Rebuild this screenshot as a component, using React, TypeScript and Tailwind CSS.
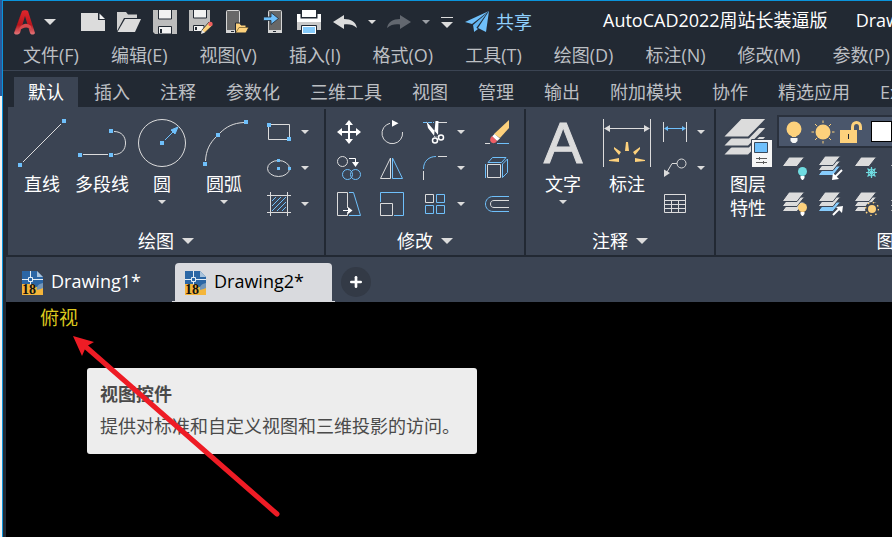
import { Plus } from 'lucide-react';
import type { ReactNode } from 'react';

type IconProps = { children: ReactNode; size?: number };

type Tool = {
  label: string;
  icon: ReactNode;
  split?: boolean;
};

const LIGHT = '#dcdcdc';
const BLUE = '#6fc0fb';
const YELLOW = '#fdd17c';
const TEAL = '#6fdbe0';
const DARK = '#222933';
const PANEL = '#3b4453';

const menus = [
  '文件(F)',
  '编辑(E)',
  '视图(V)',
  '插入(I)',
  '格式(O)',
  '工具(T)',
  '绘图(D)',
  '标注(N)',
  '修改(M)',
  '参数(P)',
];

const ribbonTabs = [
  '默认',
  '插入',
  '注释',
  '参数化',
  '三维工具',
  '视图',
  '管理',
  '输出',
  '附加模块',
  '协作',
  '精选应用',
  'Express Tools',
];

function Icon({ children, size = 24 }: IconProps) {
  return (
    <svg
      width={size}
      height={size}
      viewBox={`0 0 ${size} ${size}`}
      fill="none"
      stroke={LIGHT}
      className="block shrink-0"
      aria-hidden="true"
    >
      {children}
    </svg>
  );
}

function Grip({ x, y }: { x: number; y: number }) {
  return <rect x={x - 2} y={y - 2} width="4" height="4" fill={BLUE} stroke="none" />;
}

function Caret({ large = false, dim = false }: { large?: boolean; dim?: boolean }) {
  return (
    <svg
      width={large ? 12 : 8}
      height={large ? 6 : 4}
      viewBox="0 0 8 4"
      className="block shrink-0"
      aria-hidden="true"
    >
      <path d="M0 0H8L4 4z" fill={dim ? '#9b9fa5' : LIGHT} />
    </svg>
  );
}

/* Quick access icons */

function AppLogo() {
  return (
    <svg width="22" height="25" viewBox="0 0 22 25" fill="none" aria-hidden="true">
      <defs>
        <linearGradient id="logo-red" x1="0" y1="0" x2="0" y2="1">
          <stop offset="0" stopColor="#e0262c" />
          <stop offset="0.6" stopColor="#b8161d" />
          <stop offset="1" stopColor="#e3777b" />
        </linearGradient>
      </defs>
      <path
        d="M8 1C9 0 13 0 14 1L21 23C20 25 17 25 16 23L11 6L6 23C4 25 1 25 0 23z"
        fill="url(#logo-red)"
      />
      <path d="M6 17C10 13 13 13 17 16L18 20C13 16 10 17 4 21z" fill="#d8494d" />
      <path d="M8 1L2 19L0 23L6 6z" fill="#8f1017" opacity="0.5" />
    </svg>
  );
}

function NewIcon() {
  return (
    <Icon>
      <path d="M0 3H17V10H24V21H0z" fill={LIGHT} stroke="none" />
      <path d="M18.500 3.500L24 9H18.500z" fill="#f4f4f4" stroke="none" />
    </Icon>
  );
}

function OpenIcon() {
  return (
    <Icon>
      <path d="M0 2H9L11 4.500H20V8H7L0 21z" fill="#d0d0d0" stroke="none" />
      <path d="M8 9H24L18 22H0.500z" fill={LIGHT} stroke="none" />
    </Icon>
  );
}

function SaveIcon() {
  return (
    <Icon>
      <path d="M0 0H24V24H2L0 22z" fill="#bdbdbd" stroke="none" />
      <path d="M5.500 -1H18.500V9H5.500z" fill="#f2f2f2" stroke={DARK} />
      <path d="M5.500 16.500H18.500V24H5.500z" fill="#f2f2f2" stroke={DARK} />
      <path d="M7 19H9V23H7z" fill={DARK} stroke="none" />
    </Icon>
  );
}

function SaveAsIcon() {
  return (
    <Icon>
      <path d="M0 0H21V12L12 21H0z" fill="#bdbdbd" stroke="none" />
      <path d="M4.500 -1H17.500V8H4.500z" fill="#f2f2f2" stroke={DARK} />
      <path d="M4.500 15.500H15V21.500H4.500z" fill="#f2f2f2" stroke={DARK} />
      <path d="M6 17H8V20H6z" fill={DARK} stroke="none" />
      <path d="M12 24L13 20L20 12L24 15L16 22.500z" fill={YELLOW} stroke={DARK} strokeWidth="0.800" />
      <path d="M12 24L13 20L16 22.500z" fill="#e8e8e8" stroke="none" />
      <circle cx="21.500" cy="14" r="2.200" fill="#ee5f5f" stroke="none" />
    </Icon>
  );
}

function PhoneOpenIcon() {
  return (
    <Icon>
      <rect x="1.500" y="0.500" width="13" height="22" rx="1" fill="#686868" stroke="#d6d6d6" />
      <path d="M1 20H15V23H1z" fill="#d6d6d6" stroke="none" />
      <path d="M6 21H9V22H6z" fill={DARK} stroke="none" />
      <path d="M10.500 13H15L16 15H21V17H24L21 23H10.500z" fill={YELLOW} stroke={DARK} />
      <path d="M11 22.500L14 17.500H23" stroke="#7a6334" strokeWidth="0.800" />
    </Icon>
  );
}

function PhoneSaveIcon() {
  return (
    <Icon>
      <rect x="7.500" y="0.500" width="13" height="22" rx="1" fill="#686868" stroke="#d6d6d6" />
      <path d="M7 20H21V23H7z" fill="#d6d6d6" stroke="none" />
      <path d="M12 21H15V22H12z" fill={DARK} stroke="none" />
      <path d="M2.500 7H10V2.500L17.500 8.500L10 14.500V10.500H2.500z" fill={BLUE} stroke={DARK} strokeWidth="0.800" />
    </Icon>
  );
}

function PrintIcon() {
  return (
    <Icon>
      <path d="M5 0H19V7H5z" fill="#ffffff" stroke="none" />
      <path d="M0 4H3.500V8.500H20.500V4H24V12H0z" fill="#ffffff" stroke="none" />
      <path d="M0 12H24V20H0z" fill="#c9c9c9" stroke="none" />
      <path d="M4.500 15.500H19.500V24.500H4.500z" fill={BLUE} stroke={DARK} />
      <path d="M5.500 16.500H18.500V23.500H5.500z" fill="#86cbfb" stroke="#ffffff" />
    </Icon>
  );
}

function UndoIcon() {
  return (
    <Icon>
      <path
        d="M0 12L11 5V9C18 9 23 12 24 18C20 14.500 16 14 11 14.500V19z"
        fill={LIGHT}
        stroke="none"
      />
    </Icon>
  );
}

function RedoIcon() {
  return (
    <Icon>
      <path
        d="M24 12L13 5V9C6 9 1 12 0 18C4 14.500 8 14 13 14.500V19z"
        fill="#62676f"
        stroke="none"
      />
    </Icon>
  );
}

function ShareIcon() {
  return (
    <Icon>
      <path d="M0 12L24 1L7 14z" fill={BLUE} stroke="none" />
      <path d="M24 1L21 22L13 18z" fill={BLUE} stroke="none" />
      <path d="M8 15L22 3L12 17L9 21z" fill="#62b4f0" stroke="none" />
      <path d="M9 16V22L13 19" fill={BLUE} stroke="none" />
    </Icon>
  );
}

/* Draw panel */

const lineIcon = (
  <Icon size={48}>
    <path d="M5 43L43 5" />
    <Grip x={2} y={46} />
    <Grip x={46} y={2} />
  </Icon>
);

const polylineIcon = (
  <Icon size={48}>
    <path d="M5 35.500H30M36 12.500C44 12.500 47.500 18 47.500 24S44 35.500 36 35.500" />
    <Grip x={2} y={36} />
    <Grip x={33} y={36} />
    <Grip x={33} y={12} />
  </Icon>
);

const circleIcon = (
  <Icon size={48}>
    <circle cx="24" cy="24" r="23.500" />
    <path d="M27 21L36 12" stroke={BLUE} />
    <path d="M40 8L33 11L35 13L37 15z" fill={BLUE} stroke={BLUE} />
    <Grip x={24} y={24} />
  </Icon>
);

const arcIcon = (
  <Icon size={48}>
    <path d="M5.500 42C6 31 10 24 16 18M20 14C26 8 33 4 44 3.500" />
    <Grip x={5} y={45} />
    <Grip x={18} y={16} />
    <Grip x={46} y={3} />
  </Icon>
);

const drawTools: Tool[] = [
  {
    label: '矩形',
    split: true,
    icon: (
      <Icon>
        <path d="M1.500 4.500H22.500V19.500H1.500z" />
        <Grip x={2} y={5} />
        <Grip x={22} y={19} />
      </Icon>
    ),
  },
  {
    label: '椭圆',
    split: true,
    icon: (
      <Icon>
        <ellipse cx="11.500" cy="12.500" rx="11" ry="8" />
        <rect x="10" y="3" width="3" height="3" fill={BLUE} stroke="none" />
        <rect x="10" y="11" width="3" height="3" fill={BLUE} stroke="none" />
        <rect x="21" y="11" width="3" height="3" fill={BLUE} stroke="none" />
      </Icon>
    ),
  },
  {
    label: '图案填充',
    split: true,
    icon: (
      <Icon>
        <path d="M3.500 0V24M20.500 0V24M0 3.500H24M0 20.500H24" />
        <path
          d="M5 9L9 5M5 14L14 5M5 19L19 5M10 19L19 10M15 19L19 15"
          stroke={BLUE}
        />
      </Icon>
    ),
  },
];

/* Modify panel */

const modifyTools: Tool[] = [
  {
    label: '移动',
    icon: (
      <Icon>
        <path d="M12 3V21M3 12H21" stroke="#ffffff" strokeWidth="2" />
        <path
          d="M12 0L16 5H8zM12 24L8 19H16zM0 12L5 8V16zM24 12L19 16V8z"
          fill="#ffffff"
          stroke="none"
        />
      </Icon>
    ),
  },
  {
    label: '旋转',
    icon: (
      <Icon>
        <path d="M22.500 12A10.300 10.300 0 1 1 10 3.300" />
        <path d="M12 0L18.500 3.300L12 6.700z" fill="#ffffff" stroke="none" />
      </Icon>
    ),
  },
  {
    label: '修剪',
    split: true,
    icon: (
      <Icon>
        <path d="M0 2.500H11" stroke={BLUE} strokeDasharray="4 1" />
        <path d="M15 2.500H24" />
        <path d="M3.500 1.500L5 8L12 17L16 16zM12.500 1H15.500L15 16L11 17z" fill="#ffffff" stroke="none" />
        <circle cx="12" cy="20.500" r="2.500" stroke="#ffffff" strokeWidth="1.500" />
        <circle cx="18" cy="17.500" r="2.500" stroke="#ffffff" strokeWidth="1.500" />
      </Icon>
    ),
  },
  {
    label: '删除',
    icon: (
      <Icon>
        <path d="M0 23.500H5" />
        <path d="M12 23.500H24" stroke={BLUE} />
        <path d="M24 0V8L15 18L9 14z" fill={YELLOW} stroke="none" />
        <path d="M9.500 14L15 18.500L12 21L7 16.500z" fill="#ffffff" stroke="none" />
        <path d="M7 16L12 21C10 24 7 23.500 6 22C4.500 20.500 5 18 7 16z" fill="#ee5f66" stroke="none" />
      </Icon>
    ),
  },
  {
    label: '复制',
    icon: (
      <Icon>
        <circle cx="5.500" cy="5.500" r="5" />
        <circle cx="10.500" cy="18.500" r="5" stroke={BLUE} />
        <circle cx="18.500" cy="18.500" r="5" stroke={BLUE} />
        <path d="M12 2.500H18.500V7" stroke="#ffffff" />
        <path d="M15 6H22L18.500 11z" fill="#ffffff" stroke="none" />
      </Icon>
    ),
  },
  {
    label: '镜像',
    icon: (
      <Icon>
        <path d="M10.500 2V22.500H0.500z" />
        <path d="M12.500 2V22.500H22.500z" stroke={BLUE} />
      </Icon>
    ),
  },
  {
    label: '圆角',
    split: true,
    icon: (
      <Icon>
        <path d="M0.500 15V24M15 0.500H24" />
        <path d="M0.500 13C0.500 5 6 0.500 13 0.500" stroke={BLUE} />
      </Icon>
    ),
  },
  {
    label: '分解',
    icon: (
      <Icon>
        <path d="M2.500 8.500H15.500V21.500H2.500z" />
        <path
          d="M0.500 8V22M3 6.500L7.500 1.500H21L16.500 6.500zM17.500 8L22.500 3V16.500L17.500 21.500z"
          stroke={BLUE}
        />
      </Icon>
    ),
  },
  {
    label: '拉伸',
    icon: (
      <Icon>
        <path d="M10.500 16V0.500H0.500V23.500H10.500V20" />
        <path d="M12 0.500H16.500L23.500 23.500H12" stroke={BLUE} />
        <path d="M6 18.500H13" stroke="#ffffff" />
        <path d="M11 15L15.500 18.500L11 22z" fill="#ffffff" stroke="none" />
      </Icon>
    ),
  },
  {
    label: '缩放',
    icon: (
      <Icon>
        <path d="M0.500 11.500H12.500V23.500H0.500z" />
        <path d="M0.500 10V0.500H23.500V23.500H14" stroke={BLUE} />
      </Icon>
    ),
  },
  {
    label: '阵列',
    split: true,
    icon: (
      <Icon>
        <path d="M2.500 2.500H10.500V10.500H2.500z" />
        <path
          d="M13.500 2.500H21.500V10.500H13.500zM2.500 13.500H10.500V21.500H2.500zM13.500 13.500H21.500V21.500H13.500z"
          stroke={BLUE}
        />
      </Icon>
    ),
  },
  {
    label: '偏移',
    icon: (
      <Icon>
        <path d="M24 4.500H8C3.500 4.500 0.500 8 0.500 12S3.500 19.500 8 19.500H24" stroke={BLUE} />
        <path d="M24 8.500H9C6.500 8.500 5.500 10 5.500 12S6.500 15.500 9 15.500H24" />
      </Icon>
    ),
  },
];

/* Annotation panel */

const dimensionIcon = (
  <Icon size={48}>
    <path d="M0.500 0V48M47.500 0V48M3 9.500H45" />
    <path d="M1 9.500L7 6V13zM47 9.500L41 13V6z" fill={LIGHT} stroke="none" />
    <path
      d="M23 23H25L26 32H22zM11 28L18 33L16 36L11 30zM37 28L30 33L32 36L37 30zM6 41L16 39V43L6 42zM42 41L32 39V43L42 42z"
      fill={YELLOW}
      stroke="none"
    />
  </Icon>
);

const annotationTools: Tool[] = [
  {
    label: '线性',
    split: true,
    icon: (
      <Icon>
        <path d="M0.500 2V22M23.500 2V22" />
        <path d="M2 8.500H22" stroke={BLUE} />
        <path d="M1 8.500L5 6V11zM23 8.500L19 11V6z" fill={BLUE} stroke="none" />
      </Icon>
    ),
  },
  {
    label: '引线',
    split: true,
    icon: (
      <Icon>
        <circle cx="18.500" cy="7.500" r="4.500" />
        <path d="M14 7.500H9L4 16" />
        <path d="M1 13.500L7 17L1 21z" fill={LIGHT} stroke="none" />
      </Icon>
    ),
  },
  {
    label: '表格',
    icon: (
      <Icon>
        <path d="M1.500 2.500H22.500V20.500H1.500zM1.500 8.500H22.500M1.500 12.500H22.500M1.500 16.500H22.500M8.500 8.500V20.500M15.500 8.500V20.500" />
      </Icon>
    ),
  },
];

/* Layer panel */

function Sheet({ y, fill = LIGHT }: { y: number; fill?: string }) {
  return (
    <path
      d="M6 0H21.500L14 9.500H-1z"
      transform={`translate(0 ${y})`}
      fill={fill}
      stroke={PANEL}
      strokeWidth="1"
    />
  );
}

function Bulb({ fill }: { fill: string }) {
  return (
    <>
      <circle cx="19.500" cy="15.500" r="4.500" fill={fill} stroke="none" />
      <path d="M17.500 20H21.500V22L20 24H19L17.500 22z" fill="#ffffff" stroke="none" />
    </>
  );
}

function Sheets({ last }: { last?: string }) {
  return (
    <>
      <Sheet y={10} fill={last} />
      <Sheet y={5} />
      <Sheet y={0} />
    </>
  );
}

const layerPropertiesIcon = (
  <Icon size={48}>
    {[18, 9, 0].map((y) => (
      <path
        key={y}
        d="M17 -1H43.500L24.500 18.500H-2z"
        transform={`translate(0 ${y})`}
        fill={LIGHT}
        stroke={PANEL}
        strokeWidth="2"
      />
    ))}
    <path d="M27.500 20.500H48.500V48.500H27.500z" fill="#f6f6f6" stroke={PANEL} />
    <path d="M30.500 23.500H43.500V33.500H30.500z" fill={BLUE} stroke="#3a4a5c" />
    <path d="M32 39.500H43M32 43.500H43M35.500 38V41M39.500 42V45" stroke="#5c5c5c" />
  </Icon>
);

const layerTools: Tool[] = [
  {
    label: '关',
    icon: (
      <Icon>
        <Sheet y={1} />
        <Bulb fill={TEAL} />
      </Icon>
    ),
  },
  {
    label: '隔离',
    icon: (
      <Icon>
        <Sheets last="#86cbfb" />
        <path d="M23 14L16 21" stroke="#ffffff" strokeWidth="2" />
        <path d="M13 24L14 17L20 23z" fill="#ffffff" stroke="none" />
      </Icon>
    ),
  },
  {
    label: '冻结',
    icon: (
      <Icon>
        <Sheet y={1} />
        <path
          d="M16.500 11V22M11 16.500H22M12.500 12.500L20.500 20.500M20.500 12.500L12.500 20.500"
          stroke={TEAL}
          strokeWidth="1.200"
        />
        <circle cx="16.500" cy="16.500" r="3.500" stroke={TEAL} />
      </Icon>
    ),
  },
  {
    label: '锁定',
    icon: (
      <Icon>
        <Sheet y={1} />
      </Icon>
    ),
  },
  {
    label: '打开所有图层',
    icon: (
      <Icon>
        <Sheets />
        <Bulb fill={YELLOW} />
      </Icon>
    ),
  },
  {
    label: '取消隔离',
    icon: (
      <Icon>
        <Sheets last="#86cbfb" />
        <path d="M14 23L20 17" stroke="#ffffff" strokeWidth="2" />
        <path d="M24 14L23 21L17 15z" fill="#ffffff" stroke="none" />
      </Icon>
    ),
  },
  {
    label: '解冻所有图层',
    icon: (
      <Icon>
        <Sheets />
        <circle cx="17" cy="17" r="7" fill={PANEL} stroke="none" />
        <circle cx="17" cy="17" r="4" fill={YELLOW} stroke="none" />
        <circle
          cx="17"
          cy="17"
          r="6.500"
          stroke={YELLOW}
          strokeWidth="1.500"
          strokeDasharray="1.500 3.605"
        />
      </Icon>
    ),
  },
  {
    label: '解锁',
    icon: (
      <Icon>
        <Sheets />
      </Icon>
    ),
  },
];

function DwgIcon() {
  return (
    <svg width="21" height="24" viewBox="0 0 21 24" className="shrink-0" aria-hidden="true">
      <path d="M0 0H15L21 6V24H0z" fill="#2b66a5" />
      <path d="M15 0L21 6H15z" fill="#a9c3dc" />
      <path d="M0 13H12L14 16H21V24H0z" fill="#f4b53a" />
      <path d="M21 12C16 13 14 16 15 19C17 18 20 18 21 17z" fill="#7396b8" />
      <path d="M8.500 0V14M0 8.500H21" stroke="#e4eef6" strokeWidth="1" />
      <path d="M6.500 6.500H10.500V10.500H6.500z" fill="#2b66a5" stroke="#e4eef6" />
      <text
        x="0"
        y="23"
        fontFamily="Liberation Serif, serif"
        fontSize="14"
        fontWeight="bold"
        fill="#111111"
      >
        18
      </text>
    </svg>
  );
}

function LargeButton({
  icon,
  lines,
  menu = false,
  className = 'w-12',
}: {
  icon: ReactNode;
  lines: string[];
  menu?: boolean;
  className?: string;
}) {
  return (
    <button type="button" className={`flex flex-col items-center ${className}`}>
      {icon}
      <span className="mt-[5px] flex flex-col leading-6 whitespace-nowrap text-white">
        {lines.map((line) => (
          <span key={line}>{line}</span>
        ))}
      </span>
      {menu ? (
        <span className="mt-1">
          <Caret />
        </span>
      ) : null}
    </button>
  );
}

function ToolButton({ tool }: { tool: Tool }) {
  return (
    <button type="button" aria-label={tool.label} className="flex h-6 items-center gap-[10px]">
      {tool.icon}
      {tool.split ? <Caret /> : null}
    </button>
  );
}

function Panel({
  title,
  className,
  children,
}: {
  title: string;
  className: string;
  children: ReactNode;
}) {
  return (
    <section
      className={`flex shrink-0 flex-col justify-between bg-[#3b4453] ${className}`}
    >
      <div className="flex pt-3">{children}</div>
      <button
        type="button"
        className="flex h-7 items-center justify-center gap-2 text-white"
      >
        <span>{title}</span>
        <Caret large />
      </button>
    </section>
  );
}

function PanelDivider() {
  return (
    <div className="flex w-[2px] shrink-0 bg-[#3b4453] pt-[2px]">
      <div className="w-full bg-[#222933]" />
    </div>
  );
}

function TitleBar() {
  return (
    <header className="flex h-10 items-center pt-[2px] pl-[11px]">
      <button type="button" aria-label="应用程序菜单" className="flex w-[67px] shrink-0 items-center gap-2">
        <AppLogo />
        <Caret large />
      </button>

      <div className="flex shrink-0 items-center gap-3">
        <button type="button" aria-label="新建">
          <NewIcon />
        </button>
        <button type="button" aria-label="打开">
          <OpenIcon />
        </button>
        <button type="button" aria-label="保存">
          <SaveIcon />
        </button>
        <button type="button" aria-label="另存为">
          <SaveAsIcon />
        </button>
        <button type="button" aria-label="从 Web 和 Mobile 中打开">
          <PhoneOpenIcon />
        </button>
        <button type="button" aria-label="保存到 Web 和 Mobile">
          <PhoneSaveIcon />
        </button>
        <button type="button" aria-label="打印">
          <PrintIcon />
        </button>
        <div className="flex">
          <button type="button" aria-label="放弃">
            <UndoIcon />
          </button>
          <button type="button" aria-label="放弃列表" className="flex w-[30px] items-center justify-center">
            <Caret />
          </button>
          <button type="button" aria-label="重做">
            <RedoIcon />
          </button>
          <button type="button" aria-label="重做列表" className="flex w-[30px] items-center justify-center">
            <Caret dim />
          </button>
          <button
            type="button"
            aria-label="自定义快速访问工具栏"
            className="flex flex-col items-center justify-center gap-1"
          >
            <span className="h-px w-3 bg-[#dcdcdc]" />
            <Caret large />
          </button>
        </div>
        <button type="button" className="flex items-center gap-[7px] text-[#8fd0fd]">
          <ShareIcon />
          <span>共享</span>
        </button>
      </div>

      <h1 className="ml-[71px] flex gap-7 pb-1 whitespace-nowrap text-white">
        <span>AutoCAD2022周站长装逼版</span>
        <span>Drawing2.dwg</span>
      </h1>
    </header>
  );
}

function Ribbon() {
  return (
    <div className="flex h-[148px] overflow-hidden pl-[5px]">
      <Panel title="绘图" className="w-[316px]">
        <div className="flex gap-[9px] pl-[10px]">
          <LargeButton icon={lineIcon} lines={['直线']} />
          <LargeButton icon={polylineIcon} lines={['多段线']} className="w-[54px]" />
          <LargeButton icon={circleIcon} lines={['圆']} menu />
          <LargeButton icon={arcIcon} lines={['圆弧']} menu className="w-[58px]" />
        </div>
        <div className="ml-[14px] flex flex-col gap-3 pt-px">
          {drawTools.map((tool) => (
            <ToolButton key={tool.label} tool={tool} />
          ))}
        </div>
      </Panel>
      <PanelDivider />

      <Panel title="修改" className="w-[198px]">
        <div className="ml-[11px] grid grid-cols-[24px_24px_43px_24px] gap-x-[19px] gap-y-3 pt-px">
          {modifyTools.map((tool) => (
            <ToolButton key={tool.label} tool={tool} />
          ))}
        </div>
      </Panel>
      <PanelDivider />

      <Panel title="注释" className="w-[188px]">
        <div className="flex gap-4 pl-[13px]">
          <LargeButton
            icon={
              <span className="h-12 font-['Liberation_Sans',sans-serif] text-[58px] leading-12 text-[#dcdcdc] [-webkit-text-stroke:1px_#dcdcdc]">
                A
              </span>
            }
            lines={['文字']}
            menu
          />
          <LargeButton icon={dimensionIcon} lines={['标注']} />
        </div>
        <div className="ml-3 flex flex-col gap-3 pt-px">
          {annotationTools.map((tool) => (
            <ToolButton key={tool.label} tool={tool} />
          ))}
        </div>
      </Panel>
      <PanelDivider />

      <Panel title="图层" className="w-[377px]">
        <div className="pl-2">
          <LargeButton icon={layerPropertiesIcon} lines={['图层', '特性']} />
        </div>
        <div className="-mt-1 ml-[5px] flex flex-1 flex-col gap-2">
          <button
            type="button"
            aria-label="图层"
            aria-haspopup="listbox"
            className="flex h-[33px] items-center gap-[5px] border-2 border-[#2a313d] bg-[#4a566b] pl-[3px]"
          >
            <Icon>
              <circle cx="12" cy="9" r="7.500" fill={YELLOW} stroke="none" />
              <path d="M8.500 12H15.500L14 17H10z" fill={YELLOW} stroke="none" />
              <path d="M8.500 18H15.500V21L13.500 23H10.500L8.500 21z" fill="#f6f6f6" stroke="none" />
            </Icon>
            <Icon>
              <circle cx="12" cy="12" r="7.500" fill={YELLOW} stroke="none" />
              <path
                d="M12 0.500V3M12 21V23.500M0.500 12H3M21 12H23.500M4 4L6 6M18 18L20 20M20 4L18 6M6 18L4 20"
                stroke={YELLOW}
              />
            </Icon>
            <Icon>
              <path d="M0 10H17V23H0z" fill={YELLOW} stroke="none" />
              <path d="M12.500 10V7C12.500 1 20.500 1 20.500 7V10" stroke={YELLOW} strokeWidth="3" />
              <path d="M8.500 14V19" stroke={DARK} />
            </Icon>
            <span className="ml-0.5 h-[21px] w-[21px] border border-black bg-white" />
          </button>
          <div className="ml-[6px] grid grid-cols-[repeat(4,24px)] gap-3">
            {layerTools.map((tool) => (
              <ToolButton key={tool.label} tool={tool} />
            ))}
          </div>
        </div>
      </Panel>
    </div>
  );
}

function FileTabs() {
  return (
    <nav className="ml-[3px] flex h-[45px] items-end gap-[6px] bg-[#3b4453] pl-[6px]">
      <button type="button" className="flex h-[39px] w-[157px] items-center gap-2 px-[10px] text-white">
        <DwgIcon />
        <span className="pb-[3px]">Drawing1*</span>
      </button>
      <button
        type="button"
        className="relative flex h-[39px] w-[157px] items-center gap-2 rounded-t bg-[#d9dade] px-[10px] text-black"
      >
        <DwgIcon />
        <span className="pb-[3px]">Drawing2*</span>
        <span className="absolute -right-[3px] bottom-0 -left-[3px] h-px bg-[#d9dade]" />
      </button>
      <button
        type="button"
        aria-label="新图形"
        className="mb-[5px] ml-[3px] flex h-[30px] w-[30px] items-center justify-center rounded-full bg-[#333a46] text-white"
      >
        <Plus className="h-4 w-4" strokeWidth={4} />
      </button>
    </nav>
  );
}

function Canvas() {
  return (
    <main className="relative ml-[3px] min-h-[235px] flex-1 bg-black">
      <button type="button" className="ml-[34px] block pt-1 text-[19px] leading-6 text-[#dcc81e]">
        俯视
      </button>

      <div
        role="tooltip"
        className="absolute top-[66px] left-[81px] w-[390px] rounded-[3px] bg-[#ededed] px-[13px] pt-[14px] pb-4 text-[#4a4a4a]"
      >
        <p className="leading-6 font-bold">视图控件</p>
        <p className="mt-2 leading-6 whitespace-nowrap">提供对标准和自定义视图和三维投影的访问。</p>
      </div>

      <svg
        width="210"
        height="185"
        viewBox="0 0 210 185"
        className="pointer-events-none absolute top-[33px] left-[66px]"
        aria-hidden="true"
      >
        <path d="M14 12L205 179" stroke="#ee1c25" strokeWidth="5" strokeLinecap="round" />
        <path d="M1 1L22 7L15 11L13 14L10 21z" fill="#ee1c25" />
      </svg>
    </main>
  );
}

export default function App() {
  return (
    <div className="flex min-h-screen overflow-hidden bg-[#222933] font-['Open_Sans','Noto_Sans_CJK_SC',sans-serif] text-[18px] leading-6">
      <div className="flex w-[2px] shrink-0 flex-col bg-[#f2f2f2]">
        <div className="h-24 bg-[#2b5a9b]" />
      </div>

      <div className="flex min-w-0 flex-1 flex-col border-t border-l border-[#0a94dc] bg-[#222933]">
        <TitleBar />

        <nav className="flex h-[30px] items-center gap-8 overflow-hidden border-b border-[#3b4453] pb-[2px] pl-5 whitespace-nowrap text-[#bcbfc3]">
          {menus.map((menu) => (
            <button key={menu} type="button">
              {menu}
            </button>
          ))}
        </nav>

        <div
          role="tablist"
          className="flex h-9 items-end gap-0.5 overflow-hidden pl-[11px] whitespace-nowrap text-[#bcbfc3]"
        >
          {ribbonTabs.map((tab, index) => (
            <button
              key={tab}
              type="button"
              role="tab"
              aria-selected={index === 0}
              className={`h-[30px] shrink-0 px-[14px] ${index === 0 ? 'bg-[#3b4453] text-white' : ''}`}
            >
              {tab}
            </button>
          ))}
        </div>

        <Ribbon />
        <div className="h-[2px] shrink-0" />
        <FileTabs />
        <Canvas />
      </div>
    </div>
  );
}
